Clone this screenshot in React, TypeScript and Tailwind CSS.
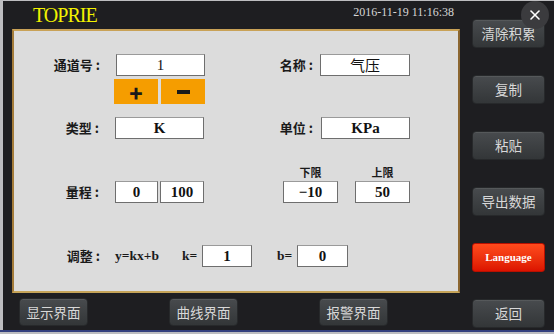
import React from "react";
import { X } from "lucide-react";

const cjk = { fontFamily: '"Noto Sans CJK SC", "Noto Sans", sans-serif' };
const serif = { fontFamily: '"Liberation Serif", "Noto Sans CJK SC", serif' };

function DarkBtn({ label, className = "" }: { label: string; className?: string }) {
  return (
    <div
      className={`flex items-center justify-center rounded-[4px] border border-[#27292b] bg-gradient-to-b from-[#484b4e] to-[#333638] text-[13.5px] text-[#d8d8d8] shadow-[inset_0_1px_0_rgba(255,255,255,0.08)] ${className}`}
      style={cjk}
    >
      {label}
    </div>
  );
}

function Box({ children, w, font = "serif", className = "" }: { children: React.ReactNode; w: string; font?: "serif" | "cjk"; className?: string }) {
  return (
    <div
      className={`flex h-[22px] items-center justify-center border border-[#6e6e6e] border-t-[#9a9a9a] bg-white text-[15px] text-[#111] ${w} ${className}`}
      style={font === "serif" ? serif : cjk}
    >
      {children}
    </div>
  );
}

function Label({ text }: { text: string }) {
  return (
    <span className="text-[13px] font-bold text-[#1a1a1a]" style={cjk}>
      {text}
      <span className="ml-[3px]">:</span>
    </span>
  );
}

export default function App() {
  return (
    <div className="relative h-[334px] w-[554px] overflow-hidden bg-[#bdbdc0]">
      <div className="ml-[3px] mt-[1px] flex h-[329px] w-[551px] bg-[#1e1e21]">
        {/* Left column */}
        <div className="flex w-[462px] flex-col">
          {/* header */}
          <div className="relative flex h-[28px] items-start">
            <span className="ml-[30px] mt-[2px] text-[20px] leading-[24px] tracking-[-1px] text-[#f2f200]" style={serif}>
              TOPRIE
            </span>
            <span className="ml-auto mr-[11px] mt-[4px] text-[12px] leading-[14px] text-[#d6d6d6]" style={serif}>
              2016-11-19 11:16:38
            </span>
          </div>
          {/* panel */}
          <div className="ml-[9px] h-[264px] w-[448px] border-2 border-t-[#c9a257] border-l-[#a47c3a] border-r-[#8c6731] border-b-[#c6a459] bg-[#dcdcdc]">
            <div className="flex flex-col">
              {/* row 1 */}
              <div className="mt-[23px] flex h-[22px] items-center">
                <div className="flex w-[102px] justify-end pr-[16px]">
                  <Label text="通道号" />
                </div>
                <Box w="w-[89px]">1</Box>
                <div className="flex w-[115px] justify-end pr-[7px]">
                  <Label text="名称" />
                </div>
                <Box w="w-[90px]" font="cjk" className="text-[14px]">
                  气压
                </Box>
              </div>
              {/* +/- */}
              <div className="ml-[100px] mt-[3px] flex h-[25px] gap-[3px]">
                <div className="flex w-[44px] items-center justify-center bg-[#f59d00] text-[22px] font-black leading-none text-[#1a1a1a]" style={cjk}>
                  +
                </div>
                <div className="flex w-[44px] items-center justify-center bg-[#f59d00]">
                  <div className="h-[4px] w-[13px] bg-[#1a1a1a]" />
                </div>
              </div>
              {/* row 2 */}
              <div className="mt-[13px] flex h-[22px] items-center">
                <div className="flex w-[101px] justify-end pr-[16px]">
                  <Label text="类型" />
                </div>
                <Box w="w-[89px]" className="font-bold text-[13px]">K</Box>
                <div className="flex w-[117px] justify-end pr-[8px]">
                  <Label text="单位" />
                </div>
                <Box w="w-[89px]" className="font-bold text-[13px]">KPa</Box>
              </div>
              {/* row 3 */}
              <div className="mt-[26px] flex items-end">
                <div className="flex h-[22px] w-[101px] items-center justify-end pr-[16px]">
                  <Label text="量程" />
                </div>
                <Box w="w-[43px]" className="font-bold">0</Box>
                <Box w="w-[44px]" className="ml-[2px] font-bold">100</Box>
                <div className="ml-[79px] flex flex-col items-center">
                  <span className="mb-[2px] text-[11px] font-bold leading-[14px] text-[#1a1a1a]" style={cjk}>下限</span>
                  <Box w="w-[55px]" className="font-bold">−10</Box>
                </div>
                <div className="ml-[17px] flex flex-col items-center">
                  <span className="mb-[2px] text-[11px] font-bold leading-[14px] text-[#1a1a1a]" style={cjk}>上限</span>
                  <Box w="w-[55px]" className="font-bold">50</Box>
                </div>
              </div>
              {/* row 4 */}
              <div className="mt-[42px] flex h-[22px] items-center">
                <div className="flex w-[101px] justify-end pr-[15px]">
                  <Label text="调整" />
                </div>
                <span className="w-[67px] text-[13.5px] font-bold text-[#1a1a1a]" style={serif}>y=kx+b</span>
                <span className="w-[20px] text-[13.5px] font-bold text-[#1a1a1a]" style={serif}>k=</span>
                <Box w="w-[50px]" className="font-bold">1</Box>
                <span className="ml-[25px] w-[20px] text-[13.5px] font-bold text-[#1a1a1a]" style={serif}>b=</span>
                <Box w="w-[51px]" className="font-bold">0</Box>
              </div>
            </div>
          </div>
          {/* bottom buttons */}
          <div className="ml-[16px] mt-[5px] flex gap-[81px]">
            <DarkBtn label="显示界面" className="h-[28px] w-[69px]" />
            <DarkBtn label="曲线界面" className="h-[28px] w-[69px]" />
            <DarkBtn label="报警界面" className="h-[28px] w-[69px]" />
          </div>
        </div>
        {/* Right column */}
        <div className="ml-[7px] flex flex-col gap-[27px] pt-[18px]">
          <DarkBtn label="清除积累" className="h-[29px] w-[73px]" />
          <DarkBtn label="复制" className="h-[29px] w-[73px]" />
          <DarkBtn label="粘贴" className="h-[29px] w-[73px]" />
          <DarkBtn label="导出数据" className="h-[29px] w-[73px]" />
          <div
            className="flex h-[29px] w-[73px] items-center justify-center rounded-[3px] border border-[#b81000] bg-gradient-to-b from-[#ff4a1c] to-[#dc1200] text-[11px] font-bold text-white"
            style={serif}
          >
            Language
          </div>
          <DarkBtn label="返回" className="h-[29px] w-[73px]" />
        </div>
      </div>
      <div className="h-[2px] w-full bg-[#34407e]" />
      {/* close button */}
      <div className="absolute left-[521px] top-[1px] flex h-[28px] w-[28px] items-center justify-center rounded-full bg-[#3b3b3e]">
        <X size={16} strokeWidth={2.4} color="#ffffff" />
      </div>
    </div>
  );
}
